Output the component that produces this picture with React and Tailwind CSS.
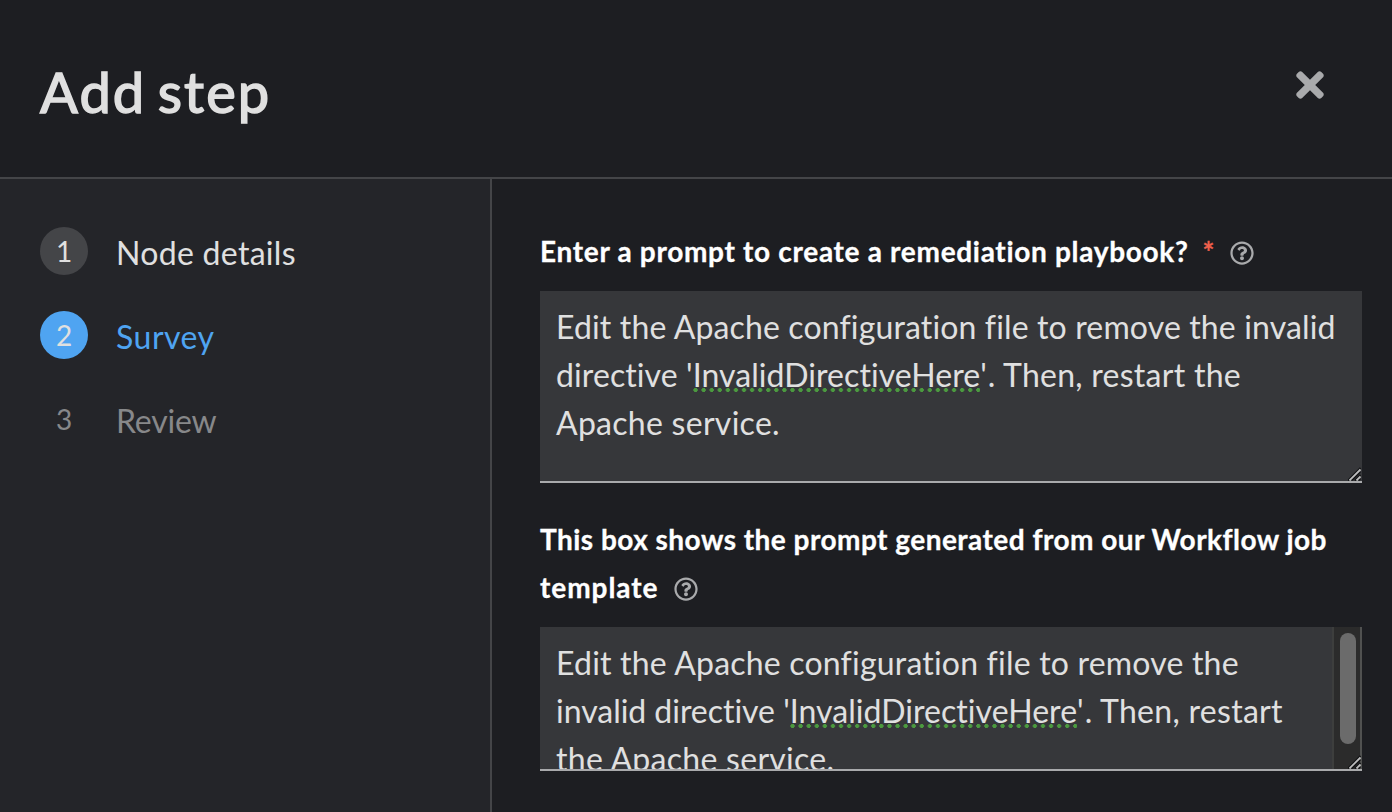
import { FaTimes, FaRegQuestionCircle } from "react-icons/fa";

const MISSPELLED =
  "bg-[radial-gradient(circle,#4b9a3f_1.8px,transparent_2.3px)] bg-[length:8.08px_4px] bg-repeat-x bg-[position:-1.5px_32.5px]";

const STEPS = [
  { n: 1, label: "Node details", badge: "bg-[#444548] text-[#e0e0e0]", text: "text-[#e0e0e0] tracking-[0.3px]" },
  { n: 2, label: "Survey", badge: "bg-[#4fa4f1] text-[#e0e0e0]", text: "text-[#4fa4f1] tracking-[0.5px]" },
  { n: 3, label: "Review", badge: "text-[#87888a]", text: "text-[#87888a] tracking-[-0.2px]" },
];

function HelpIcon({ className }) {
  return <FaRegQuestionCircle className={`inline-block size-6 text-[#a9aaac] ${className}`} />;
}

function ResizeGrip() {
  return (
    <svg className="absolute right-0 bottom-0 size-[14px]" viewBox="0 0 14 14" fill="none">
      <path d="M0 13.5 12.5 1M7 13.5 12.5 8" stroke="#111214" strokeWidth="1.8" />
      <path d="M1.5 13.5 12.5 2.5M8.5 13.5 12.5 9.5" stroke="#bcbcbd" strokeWidth="1.8" />
      <path d="M3.8 13.5 12.5 4.8M10.8 13.5 12.5 11.8" stroke="#111214" strokeWidth="1.2" />
    </svg>
  );
}

function StepList() {
  return (
    <ol className="flex w-[492px] shrink-0 flex-col gap-9 border-r-2 border-[#444548] bg-[#242529] pt-12 pl-10">
      {STEPS.map((s) => (
        <li key={s.n} className="flex h-12 items-center gap-7">
          <span className={`flex size-12 items-center justify-center rounded-full text-[28px] leading-none ${s.badge}`}>
            {s.n}
          </span>
          <span className={`pt-1 text-[32px] leading-[48px] ${s.text}`}>{s.label}</span>
        </li>
      ))}
    </ol>
  );
}

export default function App() {
  return (
    <div className="flex h-[812px] w-[1392px] flex-col overflow-hidden bg-[#1d1e22] font-['Lato',sans-serif] text-[#e0e0e0]">
      <header className="flex h-[179px] shrink-0 items-start justify-between border-b-2 border-[#444548] pr-[68px] pl-10">
        <h1 className="pt-[55px] text-[56px] leading-[73px] tracking-[2.1px] [word-spacing:-5px] [-webkit-text-stroke:1.5px_#e0e0e0]">Add step</h1>
        <button className="mt-[65px]" aria-label="Close">
          <FaTimes className="h-10 w-7 text-[#a9aaac]" />
        </button>
      </header>
      <div className="flex min-h-0 flex-1">
        <StepList />
        <main className="flex w-[870px] shrink-0 flex-col pt-12 pl-12">
          <div className="flex h-12 items-center text-[28px] leading-[48px] font-bold text-white [-webkit-text-stroke:0.3px]">
            <span className="tracking-[0.69px] whitespace-nowrap">Enter a prompt to create a remediation playbook?</span>
            <span className="ml-[14px] text-[#f0604d]">*</span>
            <HelpIcon className="mt-1 ml-4" />
          </div>
          <div className="relative mt-4 h-48 border-b-2 border-[#a9aaac] bg-[#36373a] px-4 pt-3 text-[32px] leading-[48px] whitespace-nowrap">
            <div className="tracking-[0.14px]">Edit the Apache configuration file to remove the invalid</div>
            <div>
              <span className="tracking-[0.1px]">directive '</span>
              <span className={`tracking-[0.05px] ${MISSPELLED}`}>InvalidDirectiveHere</span>
              <span className="tracking-[1px]">'</span>
              <span className="tracking-[0.27px]">. Then, restart the</span>
            </div>
            <div className="tracking-[0.28px]">Apache service.</div>
            <ResizeGrip />
          </div>
          <div className="mt-8 text-[28px] leading-[48px] font-bold whitespace-nowrap text-white [-webkit-text-stroke:0.3px]">
            <div className="tracking-[0.47px]">This box shows the prompt generated from our Workflow job</div>
            <div className="flex items-center">
              <span className="tracking-[0.95px]">template</span>
              <HelpIcon className="mt-1 ml-4" />
            </div>
          </div>
          <div className="relative mt-4 flex h-36 border-b-2 border-[#a9aaac] bg-[#36373a] text-[32px] leading-[48px] whitespace-nowrap">
            <div className="flex-1 overflow-hidden px-4 pt-3">
              <div className="tracking-[0.2px]">Edit the Apache configuration file to remove the</div>
              <div>
                <span className="tracking-[-0.03px]">invalid directive '</span>
                <span className={`tracking-[0.05px] ${MISSPELLED}`}>InvalidDirectiveHere</span>
                <span className="tracking-[1px]">'</span>
                <span className="tracking-[0.3px]">. Then, restart</span>
              </div>
              <div className="tracking-[0.28px]">the Apache service.</div>
            </div>
            <div className="w-[30px] border-r-2 border-l-2 border-r-[#505150] border-l-[#3d3e3d] bg-[#2b2b2b] pt-[6px] pl-[6px]">
              <div className="h-[111px] w-4 rounded-full bg-[#6b6b6b]" />
            </div>
            <ResizeGrip />
          </div>
        </main>
      </div>
    </div>
  );
}
